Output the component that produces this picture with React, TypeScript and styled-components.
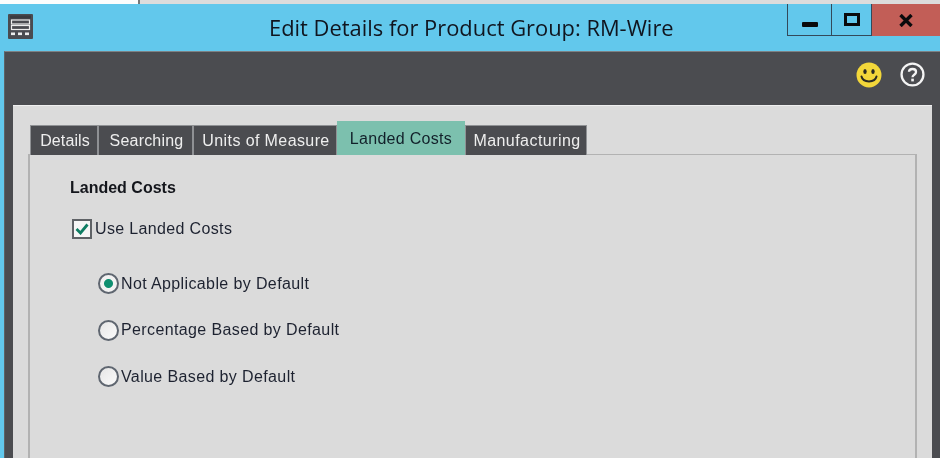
import React from "react";
import styled, { createGlobalStyle } from "styled-components";

const TABS = [
  { label: "Details", width: 68, tracking: 0.1 },
  { label: "Searching", width: 95, tracking: 0.2 },
  { label: "Units of Measure", width: 144, tracking: 0.4 },
  { label: "Landed Costs", width: 128, tracking: 0.3 },
  { label: "Manufacturing", width: 122, tracking: 0.45 },
];
const RADIOS = ["Not Applicable by Default", "Percentage Based by Default", "Value Based by Default"];

const App: React.FC = () => {
  return (
    <Page>
      <GlobalStyle />
      <TopStrip>
        <StripLeft />
        <StripRight />
      </TopStrip>
      <TitleBar>
        <AppIcon viewBox="0 0 25 25">
          <rect width="25" height="25" rx="1" fill="#4a4b50" />
          <rect x="2" y="1.5" width="21" height="3" fill="#3a3b40" />
          <rect x="3.5" y="6" width="18" height="4" fill="none" stroke="#ededed" strokeWidth="1.2" />
          <rect x="3.5" y="11.5" width="18" height="4" fill="none" stroke="#ededed" strokeWidth="1.2" />
          <rect x="3" y="18.5" width="4" height="2.6" fill="#ededed" />
          <rect x="10" y="18.5" width="4" height="2.6" fill="#ededed" />
          <rect x="17" y="18.5" width="4" height="2.6" fill="#ededed" />
        </AppIcon>
        <Title>Edit Details for Product Group: RM-Wire</Title>
        <WindowButtons>
          <WinButton $width={44} $drop={9}>
            <svg width="16" height="5" viewBox="0 0 16 5">
              <rect width="16" height="5" rx="1" fill="#0a0a0c" />
            </svg>
          </WinButton>
          <WinButton $width={40} $drop={0}>
            <svg width="16" height="13" viewBox="0 0 16 13">
              <rect x="1.5" y="1.5" width="13" height="10" fill="none" stroke="#0a0a0c" strokeWidth="3" />
            </svg>
          </WinButton>
          <CloseButton>
            <svg width="14" height="13" viewBox="0 0 14 13">
              <path d="M1.5 1 12.5 12M12.5 1 1.5 12" stroke="#0a0a0c" strokeWidth="3.4" />
            </svg>
          </CloseButton>
        </WindowButtons>
      </TitleBar>
      <DarkFrame>
        <Toolbar>
          <svg width="26" height="26" viewBox="0 0 26 26">
            <circle cx="13" cy="13" r="12.5" fill="#f3d73a" />
            <ellipse cx="9" cy="9.5" rx="1.7" ry="2.5" fill="#2a2a22" />
            <ellipse cx="17" cy="9.5" rx="1.7" ry="2.5" fill="#2a2a22" />
            <path d="M5.5 14.5C7 21 19 21 20.5 14.5" fill="none" stroke="#2a2a22" strokeWidth="2" strokeLinecap="round" />
          </svg>
          <svg width="25" height="25" viewBox="0 0 24 24">
            <circle cx="12" cy="12" r="10.5" fill="none" stroke="#f4f4f4" strokeWidth="2.2" />
            <path d="M8.6 9.4C8.8 5.8 15.4 5.8 15.4 9.6 15.4 12.2 12 12.2 12 14.6" fill="none" stroke="#f4f4f4" strokeWidth="2.2" />
            <rect x="10.8" y="16" width="2.5" height="2.6" fill="#f4f4f4" />
          </svg>
        </Toolbar>
        <Panel>
          <TabStrip>
            {TABS.map((t) => (
              <Tab key={t.label} $active={t.label === "Landed Costs"} $width={t.width} $tracking={t.tracking}>
                {t.label}
              </Tab>
            ))}
          </TabStrip>
          <TabBody>
            <SectionTitle>Landed Costs</SectionTitle>
            <CheckRow>
              <CheckBox>
                <svg width="14" height="12" viewBox="0 0 14 12">
                  <path d="M1.5 6 5.5 10 12.5 1.5" fill="none" stroke="#0f7d63" strokeWidth="2.8" />
                </svg>
              </CheckBox>
              Use Landed Costs
            </CheckRow>
            <RadioGroup>
              {RADIOS.map((r, i) => (
                <RadioRow key={r}>
                  <Radio $checked={i === 0} />
                  {r}
                </RadioRow>
              ))}
            </RadioGroup>
          </TabBody>
        </Panel>
      </DarkFrame>
    </Page>
  );
};

export default App;

const GlobalStyle = createGlobalStyle`
  html, body {
    margin: 0;
    padding: 0;
    background: #62c8ec;
  }
`;

const Page = styled.div`
  width: 940px;
  height: 458px;
  overflow: hidden;
  display: flex;
  flex-direction: column;
  background: #62c8ec;
  font-family: "Liberation Sans", Arial, sans-serif;
  color: #1d2230;
  filter: blur(0.4px);
`;

const TopStrip = styled.div`
  height: 4px;
  flex: none;
  display: flex;
`;

const StripLeft = styled.div`
  width: 138px;
  background: #fdfdfd;
  border-right: 2px solid #777;
`;

const StripRight = styled.div`
  flex: 1;
  background: #dcdcdc;
`;

const TitleBar = styled.div`
  height: 47px;
  flex: none;
  display: flex;
  align-items: flex-start;
  background: #62c8ec;
`;

const AppIcon = styled.svg`
  width: 25px;
  height: 25px;
  flex: none;
  margin: 10px 0 0 8px;
`;

const Title = styled.div`
  flex: 1;
  margin-left: 236px;
  padding-top: 9px;
  font-family: "Open Sans", sans-serif;
  font-size: 21.9px;
  line-height: 30px;
  color: #10151f;
  white-space: nowrap;
`;

const WindowButtons = styled.div`
  display: flex;
  height: 32px;
  flex: none;
`;

const WinButton = styled.div<{ $width: number; $drop: number }>`
  width: ${(p) => p.$width}px;
  display: flex;
  align-items: center;
  justify-content: center;
  padding-top: ${(p) => p.$drop}px;
  border-left: 1px solid #33495a;
  border-bottom: 1px solid #33495a;
  box-sizing: border-box;
`;

const CloseButton = styled.div`
  width: 69px;
  display: flex;
  align-items: center;
  justify-content: center;
  background: #c25e57;
  border-left: 1px solid #33495a;
  box-sizing: border-box;
`;

const DarkFrame = styled.div`
  flex: 1;
  margin-left: 4px;
  padding: 0 8px 0 8px;
  display: flex;
  flex-direction: column;
  background: #4b4c50;
  border-top: 1px solid #7d8184;
  border-left: 1px solid #5d6266;
  min-height: 0;
`;

const Toolbar = styled.div`
  height: 53px;
  box-sizing: border-box;
  flex: none;
  display: flex;
  align-items: flex-start;
  justify-content: flex-end;
  gap: 18px;
  padding: 10px 7px 0 0;
`;

const Panel = styled.div`
  flex: 1;
  background: #dbdbdb;
  padding: 15px 15px 0 15px;
  border-top: 1px solid #efefef;
  display: flex;
  flex-direction: column;
  min-height: 0;
`;

const TabStrip = styled.div`
  display: flex;
  align-items: flex-end;
  height: 34px;
  flex: none;
  margin-left: 2px;
  position: relative;
  z-index: 1;
  margin-bottom: -1px;
`;

const Tab = styled.div<{ $active: boolean; $width: number; $tracking: number }>`
  width: ${(p) => p.$width}px;
  height: ${(p) => (p.$active ? 34 : 30)}px;
  flex: none;
  box-sizing: border-box;
  display: flex;
  align-items: center;
  justify-content: center;
  padding: ${(p) => (p.$active ? "2px 0 0 0" : "0 0 0 2px")};
  background: ${(p) => (p.$active ? "#7cc0ae" : "#4b4c50")};
  color: ${(p) => (p.$active ? "#12202a" : "#eeeeee")};
  border: ${(p) => (p.$active ? "none" : "1px solid #8f9194")};
  border-bottom: none;
  font-size: 16px;
  letter-spacing: ${(p) => p.$tracking}px;
  white-space: nowrap;
`;

const TabBody = styled.div`
  flex: 1;
  padding: 23px 0 0 40px;
  border-style: solid;
  border-color: #b2b2b2;
  border-width: 1px 2px 0 2px;
`;

const SectionTitle = styled.div`
  font-size: 16px;
  font-weight: 700;
  line-height: 20px;
  color: #14161c;
`;

const CheckRow = styled.div`
  display: flex;
  align-items: center;
  margin-top: 21px;
  font-size: 16px;
  letter-spacing: 0.35px;
  line-height: 20px;
`;

const CheckBox = styled.span`
  width: 20px;
  height: 20px;
  box-sizing: border-box;
  margin: 0 3px 0 2px;
  display: flex;
  align-items: center;
  justify-content: center;
  border: 2px solid #5f6266;
  background: #f6f6f6;
`;

const RadioGroup = styled.div`
  display: flex;
  flex-direction: column;
  gap: 25.5px;
  margin: 34px 0 0 28px;
`;

const RadioRow = styled.div`
  display: flex;
  align-items: center;
  gap: 2px;
  font-size: 16px;
  letter-spacing: 0.38px;
  line-height: 20px;
`;

const Radio = styled.span<{ $checked: boolean }>`
  width: 21px;
  height: 21px;
  box-sizing: border-box;
  border-radius: 50%;
  border: 2px solid #5f6670;
  background: ${(p) =>
    p.$checked
      ? "radial-gradient(circle, #0f8f70 0 4px, #f2f2f2 5px)"
      : "linear-gradient(135deg, #e6e6e6, #fbfbfb)"};
`;
